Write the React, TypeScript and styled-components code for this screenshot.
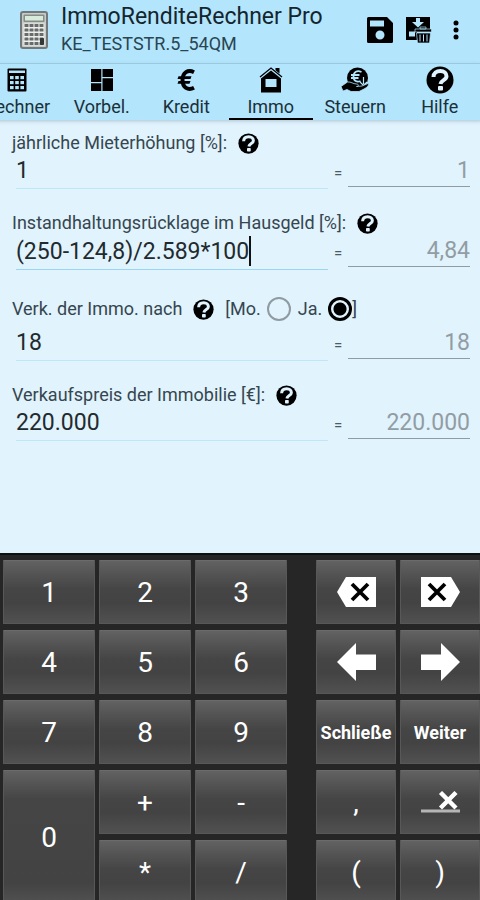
import React, { useState } from "react";
import type { ReactNode } from "react";
import styled, { createGlobalStyle } from "styled-components";

const GlobalStyle = createGlobalStyle`
  *, *::before, *::after { box-sizing: border-box; }
  body { margin: 0; background: #e1f3fd; font-family: Roboto, sans-serif; color: #1d2326; }
  button, input { font-family: inherit; }
`;

const Page = styled.div`
  display: flex;
  flex-direction: column;
  min-height: 100vh;
  overflow: hidden;
`;

const TopBar = styled.header`
  display: flex;
  align-items: center;
  height: 64px;
  padding: 0 7px 4px 20px;
  background: #b3e5fc;
  border-bottom: 1px solid #a3d2e8;
`;

const Titles = styled.div`
  flex: 1;
  min-width: 0;
  margin-left: 13px;
  white-space: nowrap;
`;

const Title = styled.h1`
  margin: 0;
  font-size: 23px;
  line-height: 28px;
  font-weight: 400;
  color: #14252e;
`;

const Subtitle = styled.div`
  font-size: 18px;
  line-height: 26px;
  color: #2a4552;
`;

const IconButton = styled.button<{ $width: number }>`
  display: flex;
  align-items: center;
  justify-content: center;
  flex: none;
  width: ${(p) => p.$width}px;
  height: 40px;
  padding: 0;
  border: 0;
  background: none;
`;

const Tabs = styled.nav`
  display: flex;
  height: 56px;
  margin-left: -25px;
  margin-right: -2px;
  background: #b3e5fc;
  box-shadow: 0 1px 4px rgba(70, 110, 130, 0.35);
`;

const Tab = styled.button<{ $active: boolean }>`
  display: flex;
  flex: 1 1 0;
  min-width: 0;
  flex-direction: column;
  align-items: center;
  padding: 0;
  border: 0;
  border-bottom: 2px solid ${(p) => (p.$active ? "#000" : "transparent")};
  background: none;
  font-size: 18px;
  line-height: 22px;
  color: #1b3039;
`;

const TabIcon = styled.span`
  display: flex;
  align-items: center;
  justify-content: center;
  height: 32px;
`;

const Form = styled.main`
  display: flex;
  flex: 1;
  flex-direction: column;
  gap: 21px;
  padding: 10px 10px 24px 12px;
`;

const LabelRow = styled.div<{ $tall?: boolean }>`
  display: flex;
  align-items: center;
  height: ${(p) => (p.$tall ? 38 : 26)}px;
  font-size: 18px;
  line-height: 20px;
  white-space: nowrap;
  color: #35464f;
`;

const HelpButton = styled.button`
  display: flex;
  margin: 0 0 0 11px;
  padding: 0;
  border: 0;
  background: none;
`;

const Choice = styled.span`
  display: flex;
  align-items: center;
  margin-left: 11px;
`;

const RadioLabel = styled.label`
  display: flex;
  align-items: center;
  gap: 6px;
  margin-right: 7px;

  &:last-of-type {
    margin-right: 0;
  }
`;

const Radio = styled.input`
  appearance: none;
  width: 24px;
  height: 24px;
  margin: 0;
  border: 2px solid #8f9ba1;
  border-radius: 50%;

  &:checked {
    border: 3px solid #000;
    background: radial-gradient(circle, #000 0 6px, transparent 7px);
  }
`;

const ValueRow = styled.div`
  display: grid;
  grid-template-columns: minmax(0, 1fr) 20px 122px;
  height: 33px;
  padding-left: 4px;
`;

const Entry = styled.div<{ $focused: boolean }>`
  display: flex;
  align-items: center;
  padding-bottom: 3px;
  border-bottom: 1px solid ${(p) => (p.$focused ? "#98d6f3" : "#bde6f7")};
`;

const EntryInput = styled.input<{ $fit: boolean }>`
  ${(p) => (p.$fit ? "field-sizing: content;" : "width: 100%;")}
  height: 28px;
  min-width: 0;
  padding: 0;
  border: 0;
  outline: 0;
  background: none;
  font-size: 23px;
  color: #222a2e;
`;

const Caret = styled.span`
  width: 2px;
  height: 30px;
  background: #111;
`;

const Equals = styled.span`
  align-self: center;
  text-align: center;
  font-size: 15px;
  line-height: 18px;
  color: #4d5b62;
`;

const Result = styled.input`
  width: 100%;
  height: 31px;
  padding: 0 0 1px;
  border: 0;
  border-bottom: 1px solid #8f9ca3;
  border-radius: 0;
  outline: 0;
  background: none;
  font-size: 23px;
  text-align: right;
  color: #929da3;
`;

const Keypad = styled.section`
  display: grid;
  grid-template-columns: 92fr 92fr 92fr 21fr 80fr 80fr;
  grid-template-rows: repeat(5, 64px);
  gap: 6px 4px;
  margin-bottom: -4px;
  padding: 5px 0 0 3px;
  border-top: 2px solid #0e1213;
  background: #262626;
`;

const Key = styled.button<{ $col: number; $row: number; $span?: number; $word?: boolean }>`
  display: flex;
  align-items: center;
  justify-content: center;
  grid-column: ${(p) => p.$col};
  grid-row: ${(p) => p.$row} / span ${(p) => p.$span ?? 1};
  min-width: 0;
  padding: 0;
  border: 1px solid #585858;
  border-top-color: #6b6b6b;
  border-radius: 1px;
  background: linear-gradient(#626262 0, #555 12px, #454545 28px, #434343 calc(100% - 20px), #515151 100%);
  font-size: ${(p) => (p.$word ? 18 : 28)}px;
  font-weight: ${(p) => (p.$word ? 700 : 400)};
  color: #fff;
`;

const HelpIcon = ({ size }: { size: number }) => (
  <svg width={size} height={size} viewBox="0 0 28 28" aria-hidden="true">
    <circle cx="14" cy="14" r="13.5" fill="#000" />
    <path d="M7.5 11C7.5 7 10.500 5 14.300 5S20.500 7.300 20.500 10.300C20.500 14.300 15 13.800 14.500 18" fill="none" stroke="#dff4ff" strokeWidth="4" />
    <rect x="12" y="20" width="5" height="4.500" rx="1" fill="#dff4ff" />
  </svg>
);

const AppLogo = () => (
  <svg width="28" height="38" viewBox="0 0 28 38" aria-hidden="true">
    <rect x="1" y="1" width="26" height="36" rx="2" fill="#c9cbc7" stroke="#73797a" strokeWidth="2" />
    <rect x="3.5" y="3.5" width="21" height="7.5" rx="1" fill="#858d89" />
    <rect x="5" y="5" width="18" height="4.5" fill="#d7ebda" />
    <rect x="3.5" y="12.5" width="21" height="22" fill="#eeeeea" />
    {[13, 17.5, 22, 26.5, 31].map((y) =>
      [4.5, 9.5, 14.5, 19.5].map((x) => <rect key={`${x}-${y}`} x={x} y={y} width="4" height="3" rx="0.6" fill="#666c6c" />)
    )}
    <rect x="20" y="27" width="4" height="7" rx="1" fill="#33383a" />
  </svg>
);

const SaveIcon = () => (
  <svg width="26" height="26" viewBox="0 0 26 26" aria-hidden="true">
    <path fillRule="evenodd" d="M1.500 0H20L26 6V24.500Q26 26 24.500 26H1.500Q0 26 0 24.500V1.500Q0 0 1.500 0ZM3 3.500V9.500H17V3.500ZM13 13.500A4.500 4.500 0 1 0 13 22.500A4.500 4.500 0 1 0 13 13.500Z" fill="#000" />
  </svg>
);

const SaveDeleteIcon = () => (
  <svg width="26" height="26" viewBox="0 0 26 26" aria-hidden="true">
    <path d="M0 0H24V12H11V23H0Z" fill="#000" />
    <path d="M10 1H14V5H18L12 10.500L6 5H10Z" fill="#b3e5fc" />
    <path d="M3 14.500H9V19.500H3Z" fill="#b3e5fc" />
    <path d="M9 12H25.500V15H9ZM14 10H20V12H14ZM10.500 16H24.500L23.500 26H11.500Z" fill="#000" stroke="#b3e5fc" strokeWidth="0.7" />
    <path d="M14 17.500V24.500M17.500 17.500V24.500M21 17.500V24.500" stroke="#b3e5fc" strokeWidth="1" />
  </svg>
);

const MoreIcon = () => (
  <svg width="6" height="20" viewBox="0 0 6 20" aria-hidden="true">
    <circle cx="3" cy="3" r="2.5" />
    <circle cx="3" cy="10" r="2.5" />
    <circle cx="3" cy="17" r="2.5" />
  </svg>
);

const CalculatorIcon = () => (
  <svg width="20" height="24" viewBox="0 0 20 24" aria-hidden="true">
    <rect x="0.5" y="0.5" width="19" height="23" rx="1" fill="#000" />
    <rect x="2" y="2.5" width="16" height="2.5" fill="#b3e5fc" />
    {[8, 13, 18].map((y) => [3, 8.2, 13.4].map((x) => <rect key={`${x}-${y}`} x={x} y={y} width="3.6" height="3.2" fill="#b3e5fc" />))}
  </svg>
);

const DashboardIcon = () => (
  <svg width="22" height="22" viewBox="0 0 22 22" aria-hidden="true">
    <path d="M0 0H10.300V13H0ZM11.500 0H22V8H11.500ZM0 14.200H10.300V22H0ZM11.500 9.200H22V22H11.500Z" />
  </svg>
);

const EuroIcon = () => (
  <svg width="18" height="22" viewBox="0 0 18 22" aria-hidden="true">
    <path d="M17 3.2C11 .2 5.5 3.4 5.5 11S11 21.8 17 18.8" fill="none" stroke="#000" strokeWidth="4" />
    <path d="M1.5 7.3H14.5L13.5 10H.5ZM1.5 12H13.5L12.5 14.7H.5Z" />
  </svg>
);

const HouseIcon = () => (
  <svg width="24" height="26" viewBox="0 0 24 26" aria-hidden="true">
    <path d="M1 10L12 1L23 10" fill="none" stroke="#000" strokeWidth="1.3" />
    <path d="M16.500 1H20.500V6.500L16.500 3.200Z" />
    <path fillRule="evenodd" d="M2 11.500L12 3.500L22 11.500V25.500H2ZM6.500 12V20H17.500V12Z" />
  </svg>
);

const TaxIcon = () => (
  <svg width="28" height="26" viewBox="0 0 28 26" aria-hidden="true">
    <circle cx="16.5" cy="11" r="10.5" />
    <path d="M20.500 5C16 3 12.500 5 12.500 9.500S16 15.500 19.500 14M10 8H18.500M10 11H17.500" fill="none" stroke="#b3e5fc" strokeWidth="1.8" />
    <path d="M22.5 10V17M19 15L22.5 18.5L26 15" fill="none" stroke="#b3e5fc" strokeWidth="1.2" />
    <path d="M0 19.5L6.5 15C10 14.5 12 17 15.5 17C18 17 18 19.5 15.5 19.5L21 19L27 16.5C29 17.5 26 20.5 23 22L18 24.5H10L6 22.5L2 24Z" stroke="#b3e5fc" strokeWidth="0.8" />
  </svg>
);

const DeleteKeyIcon = ({ forward = false }: { forward?: boolean }) => (
  <svg width="39" height="30" viewBox="0 0 39 30" aria-hidden="true">
    <path d={forward ? "M0 0H30L39 15L30 30H0Z" : "M39 0H9L0 15L9 30H39Z"} fill="#fff" />
    <path d={forward ? "M8 7L24 23M24 7L8 23" : "M15 7L31 23M31 7L15 23"} stroke="#000" strokeWidth="3.8" />
  </svg>
);

const ArrowIcon = ({ right = false }: { right?: boolean }) => (
  <svg width="39" height="38" viewBox="0 0 39 38" aria-hidden="true">
    <path d={right ? "M39 19L20 0V11.500H0V27H20V38Z" : "M0 19L19 0V11.500H39V27H19V38Z"} fill="#fff" />
  </svg>
);

const ClearLineIcon = () => (
  <svg width="39" height="22" viewBox="0 0 39 22" aria-hidden="true">
    <rect y="18.500" width="39" height="3" fill="#b5b5b5" />
    <path d="M19.500 1.500L35 17M35 1.500L19.500 17" stroke="#fff" strokeWidth="4.400" />
  </svg>
);

const tabs: { name: string; icon: ReactNode }[] = [
  { name: "Rechner", icon: <CalculatorIcon /> },
  { name: "Vorbel.", icon: <DashboardIcon /> },
  { name: "Kredit", icon: <EuroIcon /> },
  { name: "Immo", icon: <HouseIcon /> },
  { name: "Steuern", icon: <TaxIcon /> },
  { name: "Hilfe", icon: <HelpIcon size={28} /> },
];

interface FieldProps {
  id: string;
  label: string;
  value: string;
  result: string;
  focused?: boolean;
  children?: ReactNode;
}

function Field({ id, label, value, result, focused = false, children }: FieldProps) {
  const [text, setText] = useState(value);
  return (
    <div>
      <LabelRow $tall={Boolean(children)}>
        <label htmlFor={id}>{label}</label>
        <HelpButton type="button" aria-label={`Hilfe: ${label}`}>
          <HelpIcon size={21} />
        </HelpButton>
        {children}
      </LabelRow>
      <ValueRow>
        <Entry $focused={focused}>
          <EntryInput id={id} $fit={focused} value={text} onChange={(e) => setText(e.target.value)} />
          {focused && <Caret />}
        </Entry>
        <Equals>=</Equals>
        <Result aria-label={`Ergebnis: ${label}`} value={result} readOnly />
      </ValueRow>
    </div>
  );
}

interface KeyData {
  col: number;
  row: number;
  face: ReactNode;
  name?: string;
  span?: number;
  word?: boolean;
}

const keys: KeyData[] = [
  { col: 1, row: 1, face: "1" },
  { col: 2, row: 1, face: "2" },
  { col: 3, row: 1, face: "3" },
  { col: 5, row: 1, face: <DeleteKeyIcon />, name: "Links löschen" },
  { col: 6, row: 1, face: <DeleteKeyIcon forward />, name: "Rechts löschen" },
  { col: 1, row: 2, face: "4" },
  { col: 2, row: 2, face: "5" },
  { col: 3, row: 2, face: "6" },
  { col: 5, row: 2, face: <ArrowIcon />, name: "Nach links" },
  { col: 6, row: 2, face: <ArrowIcon right />, name: "Nach rechts" },
  { col: 1, row: 3, face: "7" },
  { col: 2, row: 3, face: "8" },
  { col: 3, row: 3, face: "9" },
  { col: 5, row: 3, face: "Schließe", word: true },
  { col: 6, row: 3, face: "Weiter", word: true },
  { col: 1, row: 4, face: "0", span: 2 },
  { col: 2, row: 4, face: "+" },
  { col: 3, row: 4, face: "-" },
  { col: 5, row: 4, face: "," },
  { col: 6, row: 4, face: <ClearLineIcon />, name: "Zeile leeren" },
  { col: 2, row: 5, face: "*" },
  { col: 3, row: 5, face: "/" },
  { col: 5, row: 5, face: "(" },
  { col: 6, row: 5, face: ")" },
];

export default function App() {
  const [active, setActive] = useState("Immo");
  const [unit, setUnit] = useState("Ja.");
  return (
    <Page>
      <GlobalStyle />
      <TopBar>
        <AppLogo />
        <Titles>
          <Title>ImmoRenditeRechner Pro</Title>
          <Subtitle>KE_TESTSTR.5_54QM</Subtitle>
        </Titles>
        <IconButton type="button" $width={38} aria-label="Speichern"><SaveIcon /></IconButton>
        <IconButton type="button" $width={40} aria-label="Gespeichertes löschen"><SaveDeleteIcon /></IconButton>
        <IconButton type="button" $width={34} aria-label="Menü"><MoreIcon /></IconButton>
      </TopBar>
      <Tabs>
        {tabs.map((tab) => (
          <Tab key={tab.name} type="button" $active={tab.name === active} onClick={() => setActive(tab.name)}>
            <TabIcon>{tab.icon}</TabIcon>
            {tab.name}
          </Tab>
        ))}
      </Tabs>
      <Form>
        <Field id="rent" label="jährliche Mieterhöhung [%]:" value="1" result="1" />
        <Field id="reserve" label="Instandhaltungsrücklage im Hausgeld [%]:" value="(250-124,8)/2.589*100" result="4,84" focused />
        <Field id="sale" label="Verk. der Immo. nach" value="18" result="18">
          <Choice>
            [
            {["Mo.", "Ja."].map((name) => (
              <RadioLabel key={name}>
                {name}
                <Radio type="radio" name="unit" checked={unit === name} onChange={() => setUnit(name)} />
              </RadioLabel>
            ))}
            ]
          </Choice>
        </Field>
        <Field id="price" label="Verkaufspreis der Immobilie [€]:" value="220.000" result="220.000" />
      </Form>
      <Keypad>
        {keys.map((key) => (
          <Key key={`${key.col}-${key.row}`} type="button" $col={key.col} $row={key.row} $span={key.span} $word={key.word} aria-label={key.name}>
            {key.face}
          </Key>
        ))}
      </Keypad>
    </Page>
  );
}
